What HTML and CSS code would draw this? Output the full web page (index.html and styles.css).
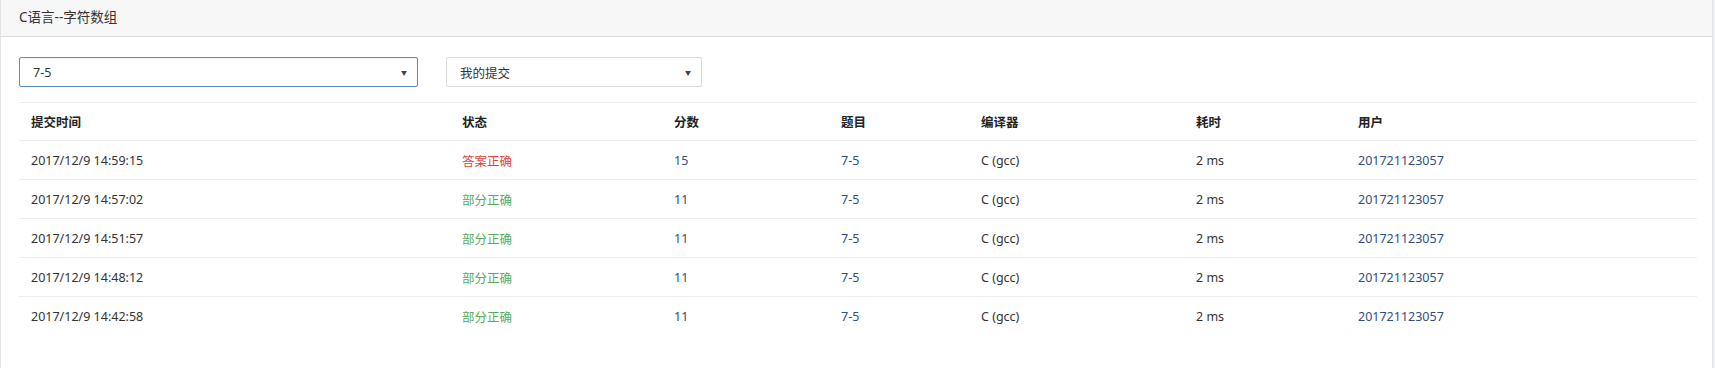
FILE: index.html
```html
<!DOCTYPE html>
<html lang="zh">
<head>
<meta charset="utf-8">
<title>C语言--字符数组</title>
<link rel="stylesheet" href="styles.css">
</head>
<body>
<div class="panel">
  <div class="panel-heading">C语言--字符数组</div>
  <div class="panel-body">
    <div class="filters">
      <div class="select select-focus"><span>7-5</span><span class="caret">▼</span></div>
      <div class="select select-2"><span>我的提交</span><span class="caret">▼</span></div>
    </div>
    <table class="table">
      <thead>
        <tr>
          <th class="c1">提交时间</th>
          <th class="c2">状态</th>
          <th class="c3">分数</th>
          <th class="c4">题目</th>
          <th class="c5">编译器</th>
          <th class="c6">耗时</th>
          <th class="c7">用户</th>
        </tr>
      </thead>
      <tbody>
        <tr>
          <td>2017/12/9 14:59:15</td>
          <td class="red">答案正确</td>
          <td class="link">15</td>
          <td class="link">7-5</td>
          <td>C (gcc)</td>
          <td>2 ms</td>
          <td class="link">201721123057</td>
        </tr>
        <tr>
          <td>2017/12/9 14:57:02</td>
          <td class="green">部分正确</td>
          <td class="link">11</td>
          <td class="link">7-5</td>
          <td>C (gcc)</td>
          <td>2 ms</td>
          <td class="link">201721123057</td>
        </tr>
        <tr>
          <td>2017/12/9 14:51:57</td>
          <td class="green">部分正确</td>
          <td class="link">11</td>
          <td class="link">7-5</td>
          <td>C (gcc)</td>
          <td>2 ms</td>
          <td class="link">201721123057</td>
        </tr>
        <tr>
          <td>2017/12/9 14:48:12</td>
          <td class="green">部分正确</td>
          <td class="link">11</td>
          <td class="link">7-5</td>
          <td>C (gcc)</td>
          <td>2 ms</td>
          <td class="link">201721123057</td>
        </tr>
        <tr>
          <td>2017/12/9 14:42:58</td>
          <td class="green">部分正确</td>
          <td class="link">11</td>
          <td class="link">7-5</td>
          <td>C (gcc)</td>
          <td>2 ms</td>
          <td class="link">201721123057</td>
        </tr>
      </tbody>
    </table>
  </div>
</div>
</body>
</html>
```
FILE: styles.css
```css
html, body {
  margin: 0;
  padding: 0;
}
body {
  background: #eceef1;
  font-family: "Noto Sans", "Noto Sans CJK SC", sans-serif;
  font-size: 12.5px;
  color: #333;
}
.panel {
  width: 1711px;
  height: 368px;
  background: #fff;
  border-left: 1px solid #e3e3e3;
  border-right: 1px solid #e3e3e3;
}
.panel-heading {
  height: 36px;
  line-height: 34px;
  padding: 0 18px;
  background: #f7f7f8;
  border-bottom: 1px solid #dcdcdc;
  font-size: 13.5px;
  color: #333;
}
.panel-body {
  padding: 20px 15px 0 18px;
}
.filters {
  display: flex;
  gap: 28px;
  margin-bottom: 15px;
}
.select {
  height: 30px;
  box-sizing: border-box;
  display: flex;
  align-items: center;
  justify-content: space-between;
  padding: 0 10px 0 13px;
  border: 1px solid #d9d9d9;
  border-radius: 2px;
  background: #fff;
  font-size: 12.5px;
  color: #333;
}
.select-focus {
  width: 399px;
  border-color: #5b8ec4;
  box-shadow: inset 0 1px 1px rgba(0,0,0,.05);
}
.select-2 {
  width: 256px;
}
.caret {
  font-size: 6px;
  color: #444;
}
.table {
  width: 1678px;
  border-collapse: collapse;
  table-layout: fixed;
}
.table th,
.table td {
  box-sizing: border-box;
  text-align: left;
  padding: 0 8px 0 12px;
  border-top: 1px solid #efefef;
  vertical-align: middle;
  white-space: nowrap;
}
.table th {
  height: 38px;
  font-weight: bold;
  color: #222;
}
.table td {
  height: 39px;
  border-top: 1px solid #ececec;
}
.c1 { width: 431px; }
.c2 { width: 212px; }
.c3 { width: 167px; }
.c4 { width: 140px; }
.c5 { width: 215px; }
.c6 { width: 162px; }
.red { color: #e0443c; }
.green { color: #5aaa5a; }
.link { color: #2f4f7f; }
```
